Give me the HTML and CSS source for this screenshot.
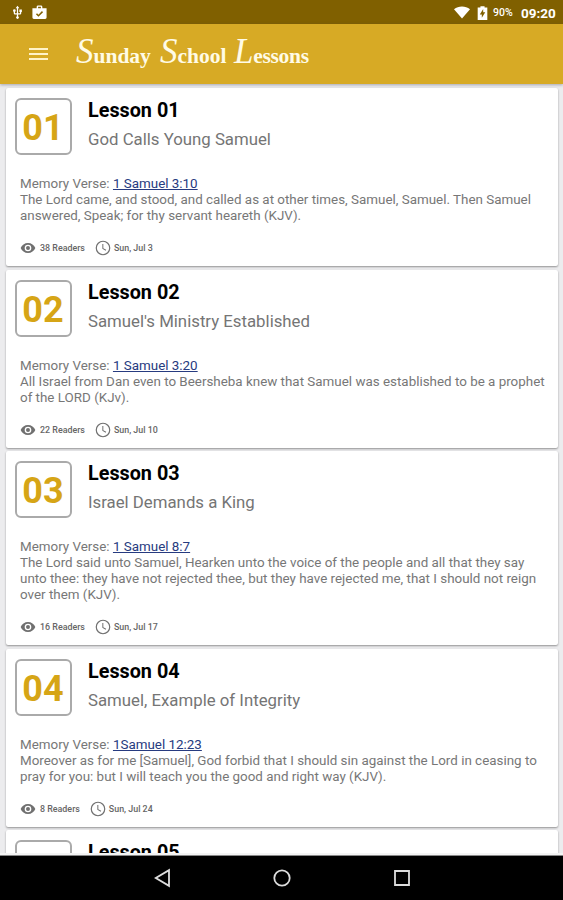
FILE: index.html
```html
<!DOCTYPE html>
<html lang="en">
<head>
    <meta charset="UTF-8">
    <meta name="viewport" content="width=device-width, initial-scale=1.0">
    <title>Sunday School Lessons</title>
    <link rel="stylesheet" href="styles.css">
</head>
<body>
    <svg class="symbols" width="0" height="0">
        <symbol id="eye" viewBox="0 0 24 24">
            <path d="M12 4.500C7 4.500 2.700 7.600 1 12c1.700 4.400 6 7.500 11 7.500s9.300-3.100 11-7.500c-1.700-4.400-6-7.500-11-7.500zM12 17a5 5 0 1 1 0-10 5 5 0 0 1 0 10zm0-8a3 3 0 1 0 0 6 3 3 0 0 0 0-6z"/>
        </symbol>
        <symbol id="clock" viewBox="0 0 24 24">
            <path d="M12 1a11 11 0 1 0 0 22 11 11 0 0 0 0-22zm0 20.200a9.200 9.200 0 1 1 0-18.400 9.200 9.200 0 0 1 0 18.400zM12.500 6H11v7l5 3 .8-1.200-4.300-2.600z"/>
        </symbol>
    </svg>
    <div class="status">
        <svg class="usb" viewBox="0 0 24 24"><path d="M15 7v4h1v2h-3V5h2l-3-4-3 4h2v8H8v-2.070c.7-.37 1.200-1.080 1.200-1.930a2.200 2.200 0 1 0-4.400 0c0 .85.5 1.560 1.200 1.930V13a2 2 0 0 0 2 2h3v3.050a2.200 2.200 0 1 0 2 0V15h3a2 2 0 0 0 2-2v-2h1V7z"/></svg>
        <svg class="bag" viewBox="0 0 24 24"><path fill-rule="evenodd" d="M16 6V4a2 2 0 0 0-2-2h-4a2 2 0 0 0-2 2v2H2v13a2 2 0 0 0 2 2h16a2 2 0 0 0 2-2V6zm-6-2h4v2h-4zm.5 14L7 14.500l1.500-1.500 2 2 5-5L17 11.500z"/></svg>
        <div class="spacer"></div>
        <svg class="wifi" viewBox="0 0 24 18"><path d="M12 18L24 4C20.500 1.300 16.500 0 12 0S3.500 1.300 0 4z"/></svg>
        <svg class="battery" viewBox="0 0 16 20"><path fill-rule="evenodd" d="M15 2h-4V0H5v2H1v18h14zM7 17v-5H4l5-8v5h3z"/></svg>
        <span class="percent">90%</span>
        <span class="time">09:20</span>
    </div>
    <header class="toolbar">
        <div class="menu"><i></i><i></i><i></i></div>
        <h1><span class="word w1"><b>S</b>unday</span><span class="word w2"><b>S</b>chool</span><span class="word w3"><b>L</b>essons</span></h1>
    </header>
    <main>
        <article class="card">
            <div class="head">
                <div class="number">01</div>
                <div><h2>Lesson 01</h2><h3>God Calls Young Samuel</h3></div>
            </div>
            <p>Memory Verse: <a>1 Samuel 3:10</a><br>The Lord came, and stood, and called as at other times, Samuel, Samuel. Then Samuel<br>answered, Speak; for thy servant heareth (KJV).</p>
            <div class="meta"><svg><use href="#eye"/></svg><span>38 Readers</span><svg class="clock"><use href="#clock"/></svg><span>Sun, Jul 3</span></div>
        </article>
        <article class="card">
            <div class="head">
                <div class="number">02</div>
                <div><h2>Lesson 02</h2><h3>Samuel's Ministry Established</h3></div>
            </div>
            <p>Memory Verse: <a>1 Samuel 3:20</a><br>All Israel from Dan even to Beersheba knew that Samuel was established to be a prophet<br>of the LORD (KJv).</p>
            <div class="meta"><svg><use href="#eye"/></svg><span>22 Readers</span><svg class="clock"><use href="#clock"/></svg><span>Sun, Jul 10</span></div>
        </article>
        <article class="card">
            <div class="head">
                <div class="number">03</div>
                <div><h2>Lesson 03</h2><h3>Israel Demands a King</h3></div>
            </div>
            <p>Memory Verse: <a>1 Samuel 8:7</a><br>The Lord said unto Samuel, Hearken unto the voice of the people and all that they say<br>unto thee: they have not rejected thee, but they have rejected me, that I should not reign<br>over them (KJV).</p>
            <div class="meta"><svg><use href="#eye"/></svg><span>16 Readers</span><svg class="clock"><use href="#clock"/></svg><span>Sun, Jul 17</span></div>
        </article>
        <article class="card">
            <div class="head">
                <div class="number">04</div>
                <div><h2>Lesson 04</h2><h3>Samuel, Example of Integrity</h3></div>
            </div>
            <p>Memory Verse: <a>1Samuel 12:23</a><br>Moreover as for me [Samuel], God forbid that I should sin against the Lord in ceasing to<br>pray for you: but I will teach you the good and right way (KJV).</p>
            <div class="meta"><svg><use href="#eye"/></svg><span>8 Readers</span><svg class="clock"><use href="#clock"/></svg><span>Sun, Jul 24</span></div>
        </article>
        <article class="card">
            <div class="head">
                <div class="number"></div>
                <div><h2>Lesson 05</h2></div>
            </div>
        </article>
    </main>
    <nav class="navbar">
        <svg viewBox="0 0 20 20"><path d="M17 2.200v15.600L3.800 10z"/></svg>
        <svg viewBox="0 0 20 20"><circle cx="10" cy="10" r="7.700"/></svg>
        <svg viewBox="0 0 20 20"><path d="M3 3h14v14H3z"/></svg>
    </nav>
</body>
</html>
```
FILE: styles.css
```css
* {
    box-sizing: border-box;
}
body {
    margin: 0;
    width: 563px;
    height: 900px;
    overflow: hidden;
    display: flex;
    flex-direction: column;
    font-family: Roboto, sans-serif;
    background: #ececee;
}
h1, h2, h3, p {
    margin: 0;
    font-weight: normal;
    white-space: nowrap;
}
.symbols {
    display: block;
    flex: none;
}
.status {
    flex: none;
    height: 24px;
    display: flex;
    align-items: center;
    padding: 1px 7px 0 10px;
    background: #806000;
    color: #fff;
    fill: #fff;
}
.usb {
    width: 15px;
    height: 17px;
}
.bag {
    width: 17px;
    height: 17px;
    margin-left: 6px;
}
.spacer {
    flex: 1;
}
.wifi {
    width: 16px;
    height: 13px;
}
.battery {
    width: 11px;
    height: 14px;
    margin-left: 7px;
}
.percent {
    font-size: 10.5px;
    font-weight: 500;
    width: 21px;
    margin-left: 5px;
}
.time {
    font-size: 13.5px;
    font-weight: bold;
    width: 35px;
    margin-left: 7px;
}
.toolbar {
    flex: none;
    position: relative;
    z-index: 1;
    height: 60px;
    display: flex;
    align-items: center;
    padding-left: 29px;
    background: #d7aa25;
    box-shadow: 0 1px 3px rgba(60, 60, 80, 0.4);
}
.menu {
    width: 19px;
    display: flex;
    flex-direction: column;
    gap: 3px;
}
.menu i {
    height: 2px;
    background: #fff3c8;
}
h1 {
    display: flex;
    align-items: baseline;
    margin-left: 28px;
    padding-top: 3px;
    color: #fffbe6;
    font: bold 21.5px/40px "Liberation Serif", serif;
}
.word {
    white-space: nowrap;
}
.word b {
    font-size: 35px;
    font-style: italic;
    font-weight: normal;
    line-height: 30px;
}
.w1 {
    width: 84px;
}
.w2 {
    width: 74px;
}
.w3 {
    letter-spacing: -0.3px;
}
main {
    flex: 1;
    min-height: 0;
    overflow: hidden;
    display: flex;
    flex-direction: column;
    gap: 3.5px;
    padding: 4px 5px 0 6px;
    border-bottom: 2px solid #f4f4f4;
}
.card {
    flex: none;
    padding: 10px 9px;
    background: #fff;
    border-radius: 2px;
    box-shadow: 0 1px 2px rgba(0, 0, 0, 0.38);
}
.head {
    display: flex;
    gap: 16px;
}
.number {
    width: 57px;
    height: 57px;
    padding-right: 1px;
    border: 2px solid #aaa;
    border-radius: 6px;
    color: #d6a516;
    font-size: 36px;
    font-weight: bold;
    line-height: 57px;
    text-align: center;
}
h2 {
    color: #000;
    font-size: 19.8px;
    font-weight: bold;
    line-height: 25px;
}
h3 {
    margin-top: 5px;
    color: #757575;
    font-size: 16.8px;
    line-height: 22px;
}
p {
    margin: 21px 0 0 5px;
    color: #777;
    font-size: 13.4px;
    line-height: 16px;
}
p a {
    color: #273b80;
    text-decoration: underline;
}
.meta {
    display: flex;
    align-items: center;
    height: 16px;
    margin: 16px 0 0 5px;
    color: #666;
    font-size: 8.9px;
    font-weight: 500;
}
.meta svg {
    width: 16px;
    height: 16px;
    margin-right: 4px;
    fill: #707070;
}
.meta .clock {
    margin-left: 10px;
    margin-right: 3px;
}
.navbar {
    flex: none;
    height: 45px;
    display: flex;
    justify-content: center;
    align-items: center;
    gap: 100px;
    background: #000;
    border-top: 1px solid #888;
}
.navbar svg {
    width: 20px;
    height: 20px;
    fill: none;
    stroke: #ddd;
    stroke-width: 1.8;
}
```
